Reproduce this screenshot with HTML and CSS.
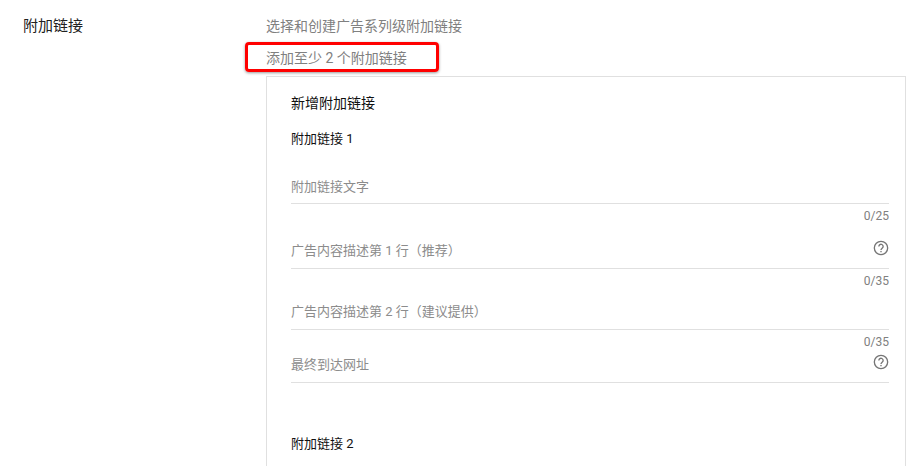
FILE: index.html
```html
<!DOCTYPE html>
<html lang="zh-CN">
<head>
    <meta charset="UTF-8">
    <meta name="viewport" content="width=device-width, initial-scale=1.0">
    <title>附加链接</title>
    <link rel="stylesheet" href="styles.css">
</head>
<body>
    <div class="section">
        <div class="section-title">附加链接</div>
        <div class="section-body">
            <div class="hint">选择和创建广告系列级附加链接</div>
            <div class="hint hint-marked">添加至少 2 个附加链接</div>
            <div class="card">
                <div class="card-title">新增附加链接</div>
                <div class="group-title">附加链接 1</div>

                <div class="field field-text">
                    <span class="placeholder">附加链接文字</span>
                </div>
                <div class="counter">0/25</div>

                <div class="field field-desc1">
                    <span class="placeholder">广告内容描述第 1 行（推荐）</span>
                    <svg class="help" viewBox="0 0 24 24" width="16" height="16">
                        <circle cx="12" cy="12" r="10" fill="none" stroke="#757575" stroke-width="2"/>
                        <path d="M8.8 9.6a3.2 3.2 0 1 1 5.2 2.5c-1.2 1-2 1.5-2 3" fill="none" stroke="#757575" stroke-width="2"/>
                        <rect x="11" y="16.4" width="2" height="2" fill="#757575"/>
                    </svg>
                </div>
                <div class="counter">0/35</div>

                <div class="field field-desc2">
                    <span class="placeholder">广告内容描述第 2 行（建议提供）</span>
                </div>
                <div class="counter">0/35</div>

                <div class="field field-url">
                    <span class="placeholder">最终到达网址</span>
                    <svg class="help" viewBox="0 0 24 24" width="16" height="16">
                        <circle cx="12" cy="12" r="10" fill="none" stroke="#757575" stroke-width="2"/>
                        <path d="M8.8 9.6a3.2 3.2 0 1 1 5.2 2.5c-1.2 1-2 1.5-2 3" fill="none" stroke="#757575" stroke-width="2"/>
                        <rect x="11" y="16.4" width="2" height="2" fill="#757575"/>
                    </svg>
                </div>

                <div class="group-title group-second">附加链接 2</div>
            </div>
        </div>
    </div>
</body>
</html>
```

FILE: styles.css
```css
* {
    margin: 0;
    padding: 0;
    box-sizing: border-box;
}

html, body {
    height: 466px;
    overflow: hidden;
}

body {
    background-color: #fff;
    font-family: Roboto, "Noto Sans CJK SC", sans-serif;
}

.section {
    display: flex;
    padding: 17px 3px 0 23px;
}

.section-title {
    width: 243px;
    font-size: 15px;
    line-height: 18px;
    color: #212121;
}

.section-body {
    flex: 1;
}

.hint {
    font-size: 14px;
    line-height: 18px;
    color: #808080;
}

.hint-marked {
    position: relative;
    margin-top: 14px;
}

/* red annotation drawn over the screenshot */
.hint-marked::before {
    content: "";
    position: absolute;
    left: -21px;
    top: -7px;
    width: 194px;
    height: 30px;
    box-sizing: border-box;
    border: 3px solid #f00;
    border-radius: 4px;
    box-shadow: 0 1px 3px rgba(0, 0, 0, 0.4);
}

.card {
    margin-top: 9px;
    height: 400px;
    padding: 17px 16px 0 24px;
    border: 1px solid #e0e0e0;
    border-bottom: none;
}

.card-title {
    font-size: 14px;
    line-height: 18px;
    color: #111;
}

.group-title {
    margin-top: 18px;
    font-size: 13px;
    line-height: 18px;
    color: #111;
}

.group-second {
    margin-top: 52px;
}

.field {
    display: flex;
    justify-content: space-between;
    align-items: flex-start;
    border-bottom: 1px solid #e0e0e0;
    height: 27px;
}

.field-text {
    margin-top: 30px;
    height: 26px;
}

.field-desc1 {
    margin-top: 18px;
}

.field-desc2 {
    margin-top: 14px;
}

.field-url {
    margin-top: 6px;
}

.placeholder {
    font-size: 13px;
    line-height: 18px;
    color: #8c8c8c;
}

.help {
    margin-top: -2px;
}

.counter {
    margin-top: 4px;
    height: 16px;
    font-size: 12px;
    line-height: 16px;
    text-align: right;
    color: #808080;
}
```
